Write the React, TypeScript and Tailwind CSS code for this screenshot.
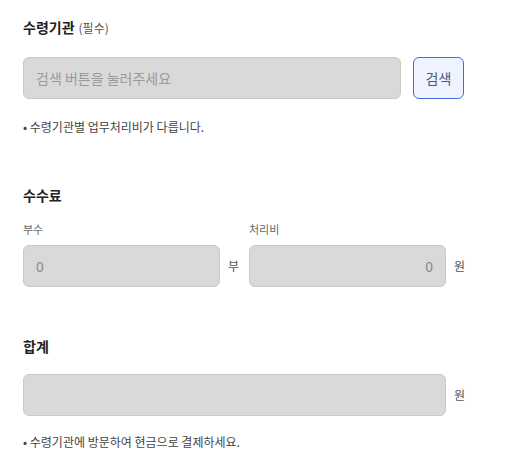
export default function App() {
  return (
    <div
      className="w-[515px] h-[474px] bg-white px-[23px] pt-[17px] text-[#222]"
      style={{ fontFamily: '"Noto Sans CJK KR", "Noto Sans", sans-serif' }}
    >
      {/* 수령기관 */}
      <div className="flex items-baseline gap-1 h-5 leading-5">
        <span className="text-[14px] font-bold">수령기관</span>
        <span className="text-[12px] text-[#555]">(필수)</span>
      </div>
      <div className="mt-5 flex items-center gap-3 w-[441px]">
        <input
          readOnly
          placeholder="검색 버튼을 눌러주세요"
          className="flex-1 h-[42px] rounded-md border border-[#c9c9c9] bg-[#d9d9d9] px-3 text-[14px] placeholder:text-[#9a9a9a] outline-none"
        />
        <button className="w-[51px] h-[42px] rounded-md border border-[#3d6fe0] bg-[#eef3ff] text-[14px] text-[#4b5878]">
          검색
        </button>
      </div>
      <p className="mt-[19px] h-[18px] leading-[18px] text-[12px] text-[#444]">
        • 수령기관별 업무처리비가 다릅니다.
      </p>

      {/* 수수료 */}
      <div className="mt-[49px] h-5 leading-5 text-[14px] font-bold">수수료</div>
      <div className="mt-4 flex items-end">
        <div className="flex flex-col">
          <span className="h-4 leading-4 text-[11px] text-[#666]">부수</span>
          <input
            readOnly
            value="0"
            className="mt-2 w-[197px] h-[42px] rounded-md border border-[#c9c9c9] bg-[#d9d9d9] px-3 text-[14px] text-[#888] outline-none"
          />
        </div>
        <span className="ml-2 w-[21px] h-[42px] leading-[42px] text-[12px] text-[#555]">부</span>
        <div className="flex flex-col">
          <span className="h-4 leading-4 text-[11px] text-[#666]">처리비</span>
          <input
            readOnly
            value="0"
            className="mt-2 w-[197px] h-[42px] rounded-md border border-[#c9c9c9] bg-[#d9d9d9] px-3 text-right text-[14px] text-[#888] outline-none"
          />
        </div>
        <span className="ml-2 h-[42px] leading-[42px] text-[12px] text-[#555]">원</span>
      </div>

      {/* 합계 */}
      <div className="mt-[49px] h-5 leading-5 text-[14px] font-bold">합계</div>
      <div className="mt-[18px] flex items-center">
        <input
          readOnly
          className="w-[423px] h-[42px] rounded-md border border-[#c9c9c9] bg-[#d9d9d9] px-3 text-[14px] outline-none"
        />
        <span className="ml-2 text-[12px] text-[#555]">원</span>
      </div>
      <p className="mt-[17px] h-[18px] leading-[18px] text-[12px] text-[#444]">
        • 수령기관에 방문하여 현금으로 결제하세요.
      </p>
    </div>
  );
}
